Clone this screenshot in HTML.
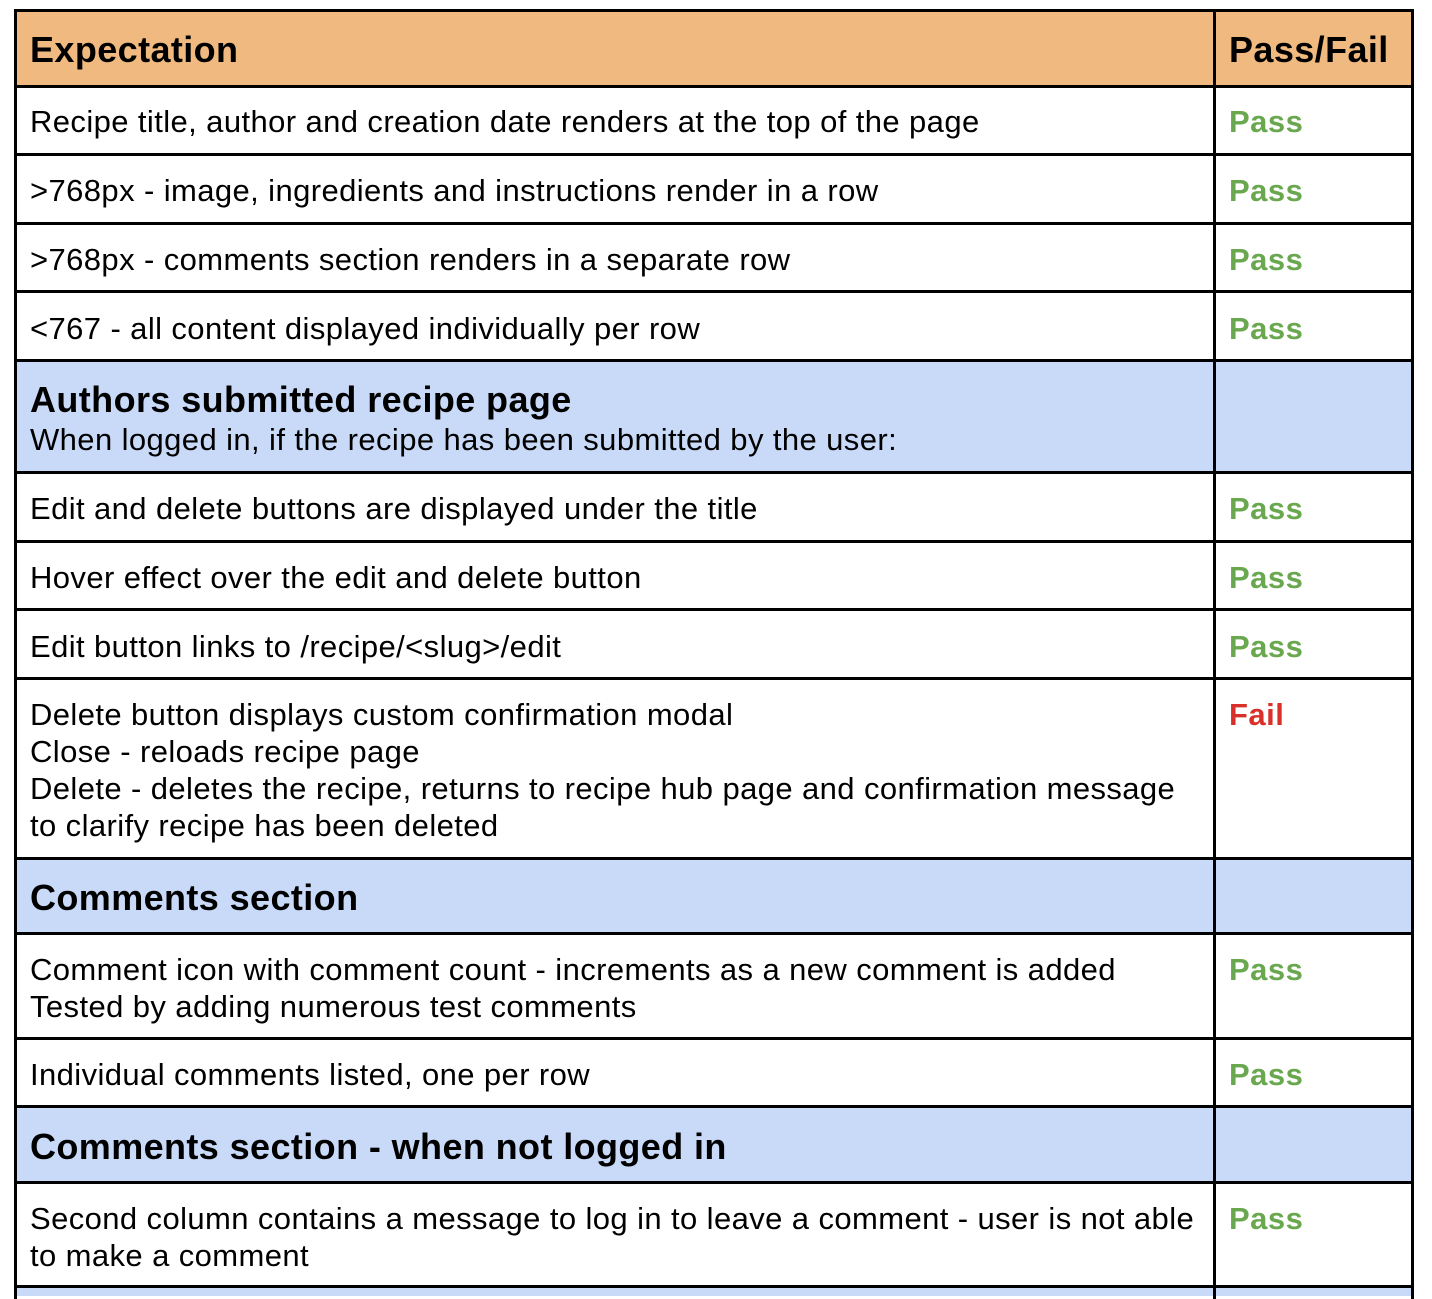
<!DOCTYPE html>
<html><head><meta charset="utf-8"><style>
body{margin:0;width:1432px;height:1296px;background:#fff;position:relative;overflow:hidden;font-family:"Liberation Sans",Arial,sans-serif;color:#000}
.r{position:absolute;left:14px;width:1400px;box-sizing:border-box}
.h{position:absolute;left:14px;width:1400px;height:3px;background:#000}
.v{position:absolute;top:9px;width:3px;height:1290px;background:#000}
.t{position:absolute;left:30px;font-size:31px;letter-spacing:0.4px;line-height:37px;white-space:nowrap}
.p{position:absolute;left:1229px;font-size:31px;letter-spacing:0.5px;line-height:37px;font-weight:bold;color:#6aa84f}
.b{font-weight:bold;font-size:36px;letter-spacing:0.4px}
</style></head><body>
<div class="r" style="top:9px;height:78px;background:#f0b97f"></div>
<div class="r" style="top:359px;height:114px;background:#c9daf8"></div>
<div class="r" style="top:857px;height:77px;background:#c9daf8"></div>
<div class="r" style="top:1105px;height:78px;background:#c9daf8"></div>
<div class="r" style="top:1285px;height:11px;background:#c9daf8"></div>

<div class="h" style="top:9px"></div>
<div class="h" style="top:85px"></div>
<div class="h" style="top:153px"></div>
<div class="h" style="top:222px"></div>
<div class="h" style="top:290px"></div>
<div class="h" style="top:359px"></div>
<div class="h" style="top:471px"></div>
<div class="h" style="top:540px"></div>
<div class="h" style="top:608px"></div>
<div class="h" style="top:677px"></div>
<div class="h" style="top:857px"></div>
<div class="h" style="top:932px"></div>
<div class="h" style="top:1037px"></div>
<div class="h" style="top:1105px"></div>
<div class="h" style="top:1181px"></div>
<div class="h" style="top:1285px"></div>
<div class="v" style="left:14px"></div>
<div class="v" style="left:1213px"></div>
<div class="v" style="left:1411px"></div>

<div class="t b" style="top:31px">Expectation</div>
<div class="t b" style="top:31px;left:1229px">Pass/Fail</div>

<div class="t" style="top:103px">Recipe title, author and creation date renders at the top of the page</div>
<div class="p" style="top:103px">Pass</div>
<div class="t" style="top:172px">&gt;768px - image, ingredients and instructions render in a row</div>
<div class="p" style="top:172px">Pass</div>
<div class="t" style="top:241px">&gt;768px - comments section renders in a separate row</div>
<div class="p" style="top:241px">Pass</div>
<div class="t" style="top:310px">&lt;767 - all content displayed individually per row</div>
<div class="p" style="top:310px">Pass</div>

<div class="t b" style="top:381px">Authors submitted recipe page</div>
<div class="t" style="top:421px">When logged in, if the recipe has been submitted by the user:</div>

<div class="t" style="top:490px">Edit and delete buttons are displayed under the title</div>
<div class="p" style="top:490px">Pass</div>
<div class="t" style="top:559px">Hover effect over the edit and delete button</div>
<div class="p" style="top:559px">Pass</div>
<div class="t" style="top:628px">Edit button links to /recipe/&lt;slug&gt;/edit</div>
<div class="p" style="top:628px">Pass</div>
<div class="t" style="top:696px">Delete button displays custom confirmation modal<br>Close - reloads recipe page<br>Delete - deletes the recipe, returns to recipe hub page and confirmation message<br>to clarify recipe has been deleted</div>
<div class="p" style="top:696px;color:#d9302a">Fail</div>

<div class="t b" style="top:879px">Comments section</div>

<div class="t" style="top:951px">Comment icon with comment count - increments as a new comment is added<br>Tested by adding numerous test comments</div>
<div class="p" style="top:951px">Pass</div>
<div class="t" style="top:1056px">Individual comments listed, one per row</div>
<div class="p" style="top:1056px">Pass</div>

<div class="t b" style="top:1128px">Comments section - when not logged in</div>

<div class="t" style="top:1200px">Second column contains a message to log in to leave a comment - user is not able<br>to make a comment</div>
<div class="p" style="top:1200px">Pass</div>
</body></html>
